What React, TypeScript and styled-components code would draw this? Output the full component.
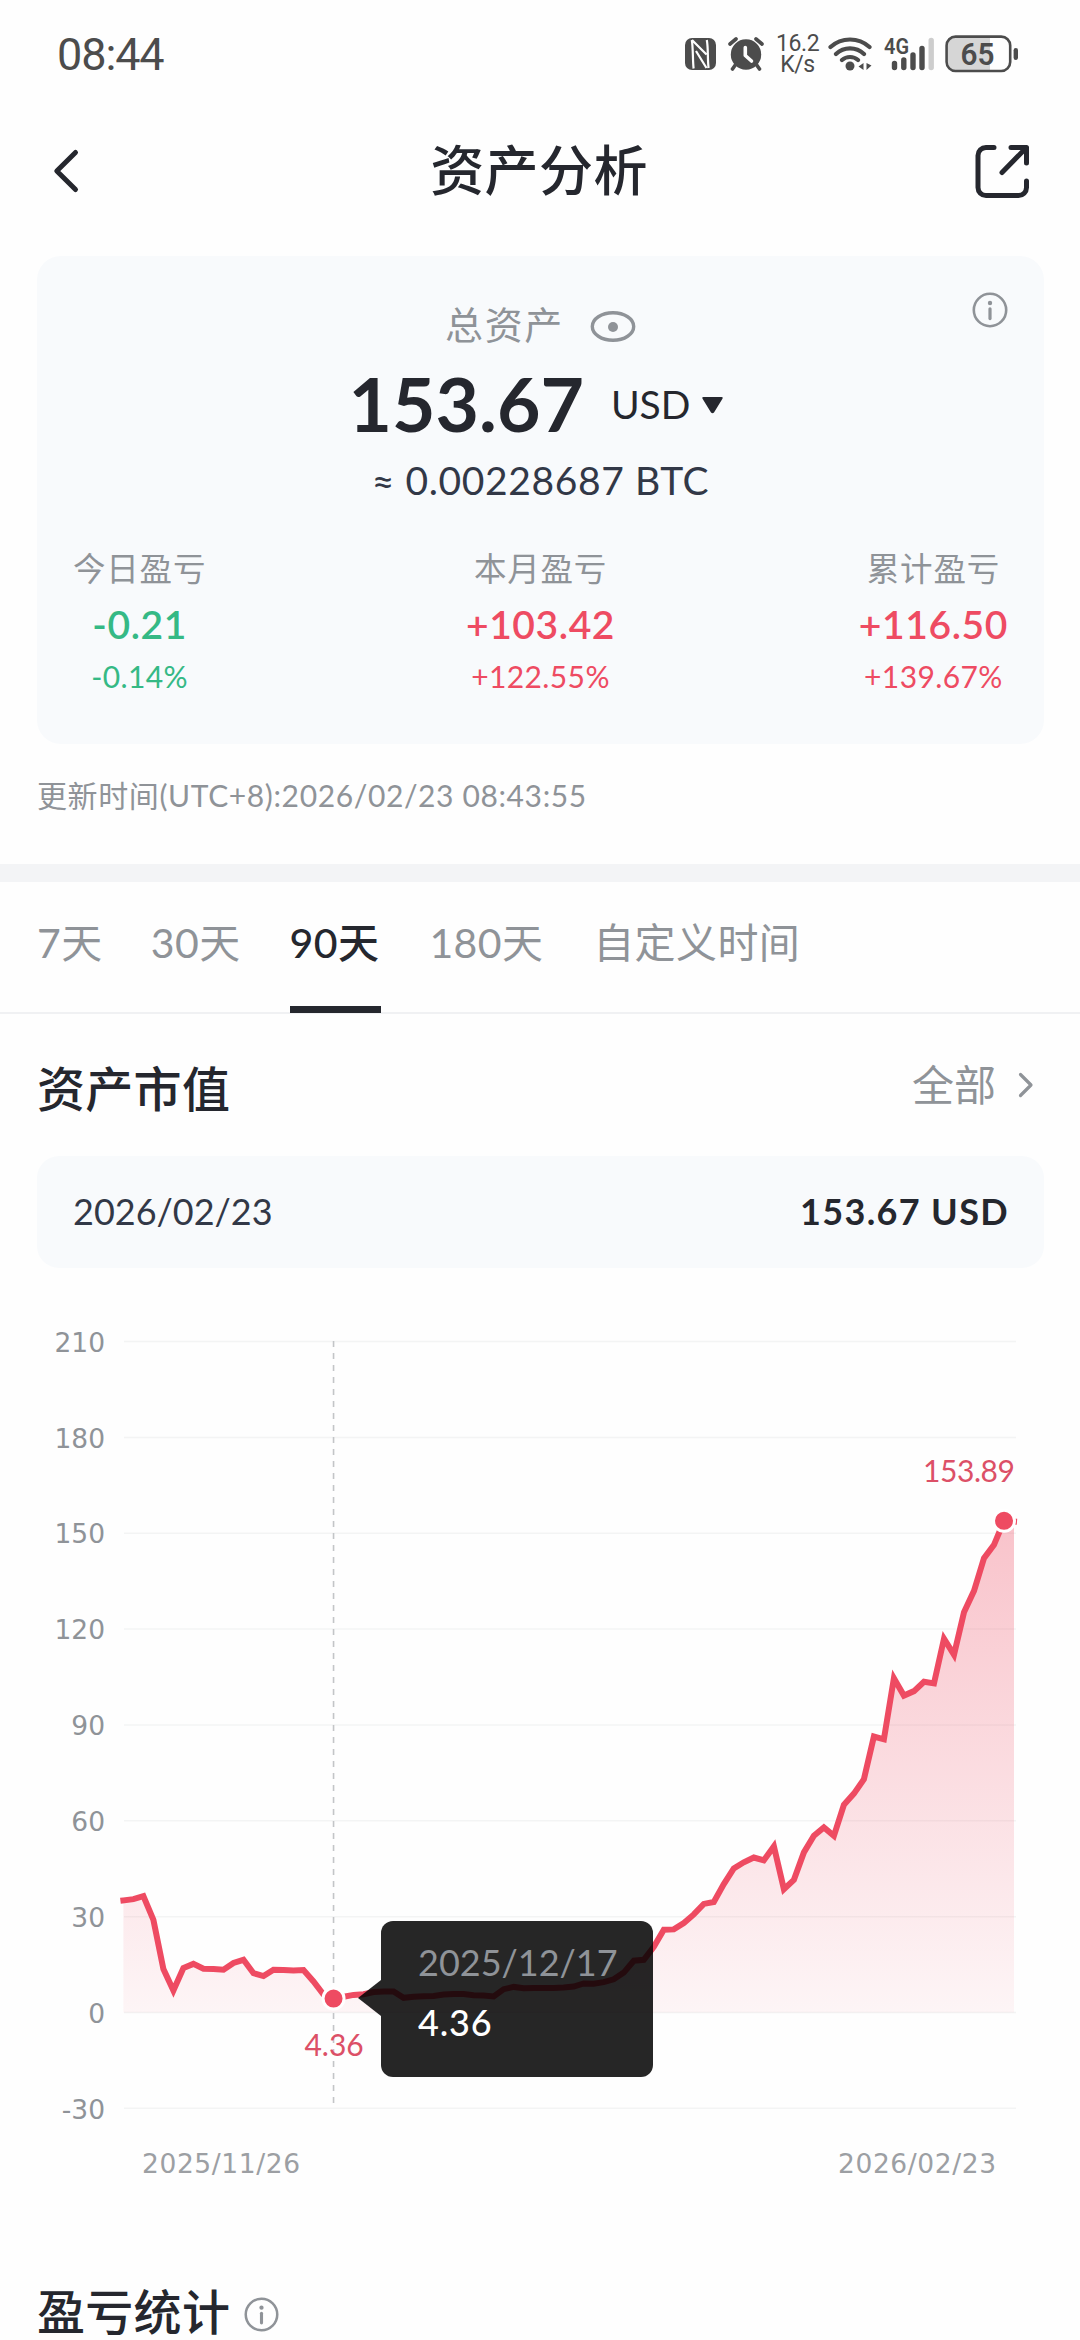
import React from "react";
import styled, { createGlobalStyle } from "styled-components";

const ink = "#25272e";
const muted = "#8f9398";
const red = "#ee4b62";
const green = "#35b985";
const panel = "#f8fafc";
const latin = `Lato, "Noto Sans CJK SC", sans-serif`;

const GlobalStyle = createGlobalStyle`
  html, body { margin: 0; padding: 0; background: #fefefe; }
  * { box-sizing: border-box; }
`;

const Screen = styled.main`
  width: 1080px;
  height: 2340px;
  overflow: hidden;
  display: flex;
  flex-direction: column;
  background: #fefefe;
  color: ${ink};
  font-family: ${latin};
  white-space: nowrap;
`;

const StatusBar = styled.div`
  height: 108px;
  flex: none;
  display: flex;
  align-items: center;
  justify-content: space-between;
  padding: 0 61px 0 57px;
  color: #4c4c4c;
  font-family: Roboto, sans-serif;
`;

const Clock = styled.span`
  padding-top: 2px;
  font-size: 45px;
  line-height: 54px;
  letter-spacing: -1.1px;
`;

const StatusIcons = styled.div`
  display: flex;
  align-items: center;
  height: 44px;
`;

const NetSpeed = styled.div`
  width: 43px;
  margin: 0 9px 0 12px;
  font-size: 23px;
  line-height: 21px;
  letter-spacing: -0.4px;
  text-align: center;
`;

const AlarmSvg = styled.svg`
  margin-left: 12px;
`;

const SignalSvg = styled.svg`
  margin-left: 12px;
`;

const BatterySvg = styled.svg`
  margin-left: 9px;
`;

const Header = styled.header`
  height: 125px;
  flex: none;
  display: flex;
  align-items: center;
  justify-content: space-between;
  padding: 0 48px;
`;

const PageTitle = styled.h1`
  margin: 0 0 0 2px;
  font-size: 54px;
  line-height: 64px;
  font-weight: 500;
  letter-spacing: 0.4px;
`;

const ShareSvg = styled.svg`
  margin-top: 3px;
`;

const Summary = styled.section`
  position: relative;
  flex: none;
  height: 488px;
  margin: 23px 36px 1px 37px;
  padding: 44px 36px 0;
  border-radius: 24px;
  background: ${panel};
  display: flex;
  flex-direction: column;
`;

const InfoCorner = styled.div`
  position: absolute;
  top: 36px;
  right: 36px;
  display: flex;
`;

const TotalLabel = styled.div`
  display: flex;
  align-items: center;
  justify-content: center;
  gap: 26px;
  height: 52px;
  font-size: 38px;
  line-height: 46px;
  letter-spacing: 1.6px;
  color: ${muted};
`;

const TotalText = styled.span`
  margin-bottom: 4px;
`;

const TotalRow = styled.div`
  display: flex;
  align-items: center;
  justify-content: center;
  height: 74px;
  margin-top: 14px;
  padding-right: 9px;

  svg {
    margin-top: 4px;
  }
`;

const TotalValue = styled.strong`
  font-size: 75px;
  line-height: 74px;
  font-weight: 700;
`;

const Currency = styled.span`
  font-size: 39px;
  line-height: 48px;
  margin: 2px 12px 0 27px;
`;

const Approx = styled.div`
  height: 50px;
  margin-top: 16px;
  font-size: 39px;
  line-height: 49px;
  letter-spacing: 0.6px;
  text-align: center;
  color: #323847;
`;

const Stats = styled.div`
  display: grid;
  grid-template-columns: 1fr auto 1fr;
  margin-top: 41px;

  > :first-child {
    justify-self: start;
  }

  > :last-child {
    justify-self: end;
  }
`;

const Stat = styled.div<{ $color: string }>`
  display: flex;
  flex-direction: column;
  align-items: center;
  min-width: 131px;
  color: ${(p) => p.$color};
`;

const StatLabel = styled.span`
  font-size: 32.5px;
  line-height: 44px;
  letter-spacing: 0.8px;
  color: ${muted};
`;

const StatValue = styled.span`
  margin-top: 11px;
  font-size: 39px;
  line-height: 44px;
  font-weight: 600;
  letter-spacing: 0.6px;
`;

const StatPercent = styled.span`
  margin-top: 10px;
  font-size: 30px;
  line-height: 40px;
  letter-spacing: 0.4px;
`;

const Updated = styled.p`
  flex: none;
  height: 119px;
  margin: 0;
  padding: 0 37px;
  font-size: 30px;
  line-height: 101px;
  letter-spacing: 0.62px;
  color: ${muted};
`;

const Divider = styled.div`
  flex: none;
  height: 18px;
  background: #f3f4f6;
`;

const Tabs = styled.nav`
  flex: none;
  display: flex;
  gap: 48.8px;
  height: 132px;
  padding: 0 37px;
  border-bottom: 2px solid #f0f1f3;
`;

const Tab = styled.button<{ $active?: boolean; $width: number }>`
  width: ${(p) => p.$width}px;
  height: 131px;
  padding: 0 0 3px;
  border: 0;
  border-bottom: 7px solid ${(p) => (p.$active ? ink : "transparent")};
  background: none;
  font: ${(p) => (p.$active ? 500 : 400)} 41px/117px ${latin};
  letter-spacing: 0.4px;
  text-align: left;
  white-space: nowrap;
  color: ${(p) => (p.$active ? ink : muted)};
`;

const SectionHead = styled.div`
  flex: none;
  display: flex;
  align-items: center;
  justify-content: space-between;
  height: 142px;
  padding: 8px 46px 0 37px;
`;

const SectionTitle = styled.h2`
  margin: 0;
  font-size: 48px;
  line-height: 56px;
  font-weight: 500;
  letter-spacing: 0.3px;
`;

const AllLink = styled.div`
  display: flex;
  align-items: center;
  gap: 22px;
  margin-bottom: 8px;
  font-size: 42px;
  line-height: 50px;
  color: ${muted};
`;

const Selected = styled.div`
  flex: none;
  display: flex;
  align-items: center;
  justify-content: space-between;
  height: 112px;
  margin: 0 36px 0 37px;
  padding: 0 36px 3px;
  border-radius: 22px;
  background: ${panel};
  font-size: 36px;
  color: #323847;
`;

const SelectedValue = styled.strong`
  margin-right: -1px;
  font-weight: 700;
  letter-spacing: 1.35px;
  color: ${ink};
`;

const ChartArea = styled.div`
  position: relative;
  flex: none;
  height: 972px;
`;

const Tooltip = styled.div`
  position: absolute;
  left: 381px;
  top: 653px;
  width: 272px;
  height: 156px;
  padding: 17px 37px;
  border-radius: 12px;
  background: rgba(0, 0, 0, 0.85);
  display: flex;
  flex-direction: column;
  font-size: 36px;
  line-height: 48px;
  color: #fff;

  &::before {
    content: "";
    position: absolute;
    left: -23px;
    top: 59px;
    border: solid transparent;
    border-width: 18px 23px 18px 0;
    border-right-color: rgba(0, 0, 0, 0.85);
  }
`;

const TooltipDate = styled.span`
  color: #8f9398;
`;

const TooltipValue = styled.span`
  margin-top: 12px;
  font-weight: 500;
  letter-spacing: 0.8px;
`;

const NextSection = styled.div`
  flex: none;
  display: flex;
  align-items: center;
  gap: 14px;
  height: 144px;
  padding: 0 37px;

  svg {
    margin-top: 5px;
  }
`;

const InfoIcon = ({ size }: { size: number }) => (
  <svg width={size} height={size} viewBox="0 0 36 36" fill="none">
    <circle cx="18" cy="18" r="16.2" stroke={muted} strokeWidth="2.6" />
    <circle cx="18" cy="11" r="2.2" fill={muted} />
    <path d="M18 16.8V26.6" stroke={muted} strokeWidth="3.2" strokeLinecap="round" />
  </svg>
);

const StatusGlyphs = () => (
  <>
    <svg width="31" height="32" viewBox="0 0 31 32">
      <rect width="31" height="32" rx="7" fill="#4c4c4c" />
      <path
        d="M6.8 2C8.2 10 7.6 22 8.6 30.5M7 2L21.5 16.5M11 13L21.5 30M21.8 2C23.4 10 22.4 22 23.6 30"
        stroke="#fefefe"
        strokeWidth="2.2"
        fill="none"
      />
    </svg>
    <AlarmSvg width="36" height="34" viewBox="0 0 36 34">
      <circle cx="18" cy="17.5" r="15.2" fill="#4c4c4c" />
      <path d="M2 7L8 2M34 7L28 2M8 27L4.5 32M28 27L31.5 32" stroke="#4c4c4c" strokeWidth="3.6" strokeLinecap="round" />
      <path d="M17.3 10.5V18.5L23.5 24" stroke="#fefefe" strokeWidth="3.6" strokeLinecap="round" strokeLinejoin="round" fill="none" />
    </AlarmSvg>
    <NetSpeed>
      16.2
      <br />
      K/s
    </NetSpeed>
    <svg width="44" height="36" viewBox="0 0 44 36" fill="none" stroke="#4c4c4c" strokeWidth="4.2" strokeLinecap="round">
      <path d="M2.5 11C13.5 1 30.5 1 41.5 11M8 18C16 10.5 28 10.5 36 18M14 24C18.5 20 25.5 20 30 24" />
      <circle cx="22" cy="30" r="4.5" fill="#4c4c4c" stroke="none" />
      <path d="M35.5 27V34L30.5 30.5ZM38.5 27V34L43.5 29.5Z" fill="#4c4c4c" stroke="none" />
    </svg>
    <SignalSvg width="52" height="48" viewBox="0 -6 52 48">
      <text x="0" y="17.5" fontFamily="Roboto" fontWeight="600" fontSize="22" textLength="25" lengthAdjust="spacingAndGlyphs" fill="#4c4c4c">
        4G
      </text>
      <g stroke="#4c4c4c" strokeWidth="5.4" strokeLinecap="round">
        <path d="M10.5 27.5V31.5M19.8 24V31.5M29 19V31.5M38 12.5V31.5" />
        <path d="M47.2 4.5V31.5" stroke="#cdcdcd" />
      </g>
    </SignalSvg>
    <BatterySvg width="74" height="38" viewBox="0 0 74 38">
      <path d="M11 3H45V35H11Q3 34 3 27V11Q3 3 11 3Z" fill="#d6d6d6" />
      <rect x="1.6" y="1.6" width="63.6" height="34.4" rx="9" fill="none" stroke="#4c4c4c" strokeWidth="2.6" />
      <rect x="68.6" y="13" width="4.4" height="12" rx="2.2" fill="#4c4c4c" />
      <text x="15.5" y="29.8" fontFamily="Roboto" fontWeight="600" fontSize="31" textLength="34" lengthAdjust="spacingAndGlyphs" fill="#4c4c4c">
        65
      </text>
    </BatterySvg>
  </>
);

const BackIcon = () => (
  <svg width="54" height="54" viewBox="0 0 54 54" fill="none">
    <path d="M27.5 8.5L8.8 27L27.5 45.5" stroke={ink} strokeWidth="5" strokeLinecap="round" strokeLinejoin="round" />
  </svg>
);

const ShareIcon = () => (
  <ShareSvg width="58" height="58" viewBox="0 0 58 58" fill="none" stroke={ink} strokeWidth="5" strokeLinecap="round" strokeLinejoin="round">
    <path d="M20 4.5H12A8 8 0 0 0 4 12.5V44.5A8 8 0 0 0 12 52.5H44.5A8 8 0 0 0 52.5 44.5V38" />
    <path d="M37 4.5H52.5V20M52 5L28 29.5" />
  </ShareSvg>
);

const EyeIcon = () => (
  <svg width="46" height="34" viewBox="0 0 46 34">
    <ellipse cx="23" cy="17.5" rx="20.7" ry="13.8" fill="none" stroke={muted} strokeWidth="3.4" />
    <circle cx="23" cy="18" r="5" fill={muted} />
  </svg>
);

const ARROW_DOWN = "M1.5 0H19.5Q21.5 0 20.3 1.9L12 15.5Q10.5 17 9 15.5L.7 1.9Q-.5 0 1.5 0Z";

const CHART_TOP = 1268;
const X0 = 123.4;
const STEP = 10.007;
const ZERO_Y = 2012.5;
const UNIT = 95.85 / 30;

const values = [
  35.1, 35.5, 36.4, 29.0, 13.6, 6.9, 13.9, 15.2, 13.7, 13.6, 13.4, 15.5, 16.5, 12.3, 11.4, 13.4, 13.3, 13.1, 13.3,
  9.7, 5.6, 4.36, 4.9, 5.5, 5.7, 6.4, 6.6, 6.6, 4.6, 4.9, 5.1, 5.2, 5.6, 5.8, 5.8, 5.4, 5.3, 5.0, 7.3, 8.0, 7.6, 7.7,
  7.7, 7.7, 7.8, 8.1, 9.1, 9.0, 9.5, 10.4, 12.5, 16.2, 16.5, 20.6, 25.9, 26.0, 28.0, 30.7, 34.0, 34.6, 40.2, 45.1,
  47.0, 48.5, 47.6, 52.0, 38.6, 41.5, 50.1, 55.3, 57.9, 55.3, 65.0, 68.5, 73.0, 86.4, 85.5, 104.6, 99.2, 100.6,
  103.5, 103.0, 117.0, 112.0, 125.3, 132.0, 142.2, 146.4, 153.89, 153.67,
];

const toX = (i: number) => X0 + i * STEP;
const toY = (v: number) => ZERO_Y - CHART_TOP - v * UNIT;

const ticks = [210, 180, 150, 120, 90, 60, 30, 0, -30];

const Chart = () => {
  const line = values.map((v, i) => `${i ? "L" : "M"}${toX(i).toFixed(1)} ${toY(v).toFixed(1)}`).join("");
  const area = `${line}V${toY(0)}H${X0}Z`;
  const low = { x: toX(21), y: toY(4.36) };
  const high = { x: toX(88), y: toY(153.89) };
  return (
    <svg width="1080" height="972" viewBox="0 0 1080 972">
      <defs>
        <linearGradient id="fade" x1="0" y1="0" x2="0" y2="1">
          <stop offset="0" stopColor={red} stopOpacity="0.33" />
          <stop offset="1" stopColor={red} stopOpacity="0.05" />
        </linearGradient>
      </defs>
      {ticks.map((t) => (
        <g key={t}>
          <path d={`M124 ${toY(t)}H1016`} stroke="#f3f4f4" strokeWidth="1.5" />
          <text x="105" y={toY(t) + 10.2} textAnchor="end" fontFamily="DejaVu Sans" fontSize="26.5" fill={muted}>
            {t}
          </text>
        </g>
      ))}
      <path d={`M${low.x} 73V836`} stroke="#c3c5c7" strokeWidth="1.6" strokeDasharray="6 6" />
      <path d={area} fill="url(#fade)" />
      <path d={line} fill="none" stroke={red} strokeWidth="6" strokeLinecap="square" strokeMiterlimit="10" />
      {[low, high].map((p) => (
        <circle key={p.x} cx={p.x} cy={p.y} r="10.5" fill={red} stroke="#fff" strokeWidth="3" />
      ))}
      <g fontFamily="Lato" fontSize="30" fill="#dc5067">
        <text x={low.x + 0.5} y="788" textAnchor="middle">4.36</text>
        <text x="923" y="214" textLength="92">153.89</text>
      </g>
      <g fontFamily="DejaVu Sans" fontSize="26.5" fill="#9c9fa3">
        <text x="142" y="905" textLength="158">2025/11/26</text>
        <text x="838" y="905" textLength="158">2026/02/23</text>
      </g>
    </svg>
  );
};

const stats = [
  { label: "今日盈亏", value: "-0.21", percent: "-0.14%", color: green },
  { label: "本月盈亏", value: "+103.42", percent: "+122.55%", color: red },
  { label: "累计盈亏", value: "+116.50", percent: "+139.67%", color: red },
];

const tabs = [
  { label: "7天", width: 65 },
  { label: "30天", width: 90 },
  { label: "90天", width: 91, active: true },
  { label: "180天", width: 115 },
  { label: "自定义时间", width: 208 },
];

export default function App() {
  return (
    <Screen>
      <GlobalStyle />
      <StatusBar>
        <Clock>08:44</Clock>
        <StatusIcons>
          <StatusGlyphs />
        </StatusIcons>
      </StatusBar>
      <Header>
        <BackIcon />
        <PageTitle>资产分析</PageTitle>
        <ShareIcon />
      </Header>
      <Summary>
        <InfoCorner>
          <InfoIcon size={36} />
        </InfoCorner>
        <TotalLabel>
          <TotalText>总资产</TotalText>
          <EyeIcon />
        </TotalLabel>
        <TotalRow>
          <TotalValue>153.67</TotalValue>
          <Currency>USD</Currency>
          <svg width="21" height="17" viewBox="0 0 21 17">
            <path d={ARROW_DOWN} fill={ink} />
          </svg>
        </TotalRow>
        <Approx>≈ 0.00228687 BTC</Approx>
        <Stats>
          {stats.map((s) => (
            <Stat key={s.label} $color={s.color}>
              <StatLabel>{s.label}</StatLabel>
              <StatValue>{s.value}</StatValue>
              <StatPercent>{s.percent}</StatPercent>
            </Stat>
          ))}
        </Stats>
      </Summary>
      <Updated>更新时间(UTC+8):2026/02/23 08:43:55</Updated>
      <Divider />
      <Tabs>
        {tabs.map((t) => (
          <Tab key={t.label} $active={t.active} $width={t.width}>
            {t.label}
          </Tab>
        ))}
      </Tabs>
      <SectionHead>
        <SectionTitle>资产市值</SectionTitle>
        <AllLink>
          全部
          <svg width="16" height="26" viewBox="0 0 16 26" fill="none">
            <path d="M2.5 2.5L13 13L2.5 23.5" stroke={muted} strokeWidth="3.2" strokeLinecap="round" strokeLinejoin="round" />
          </svg>
        </AllLink>
      </SectionHead>
      <Selected>
        <span>2026/02/23</span>
        <SelectedValue>153.67 USD</SelectedValue>
      </Selected>
      <ChartArea>
        <Chart />
        <Tooltip>
          <TooltipDate>2025/12/17</TooltipDate>
          <TooltipValue>4.36</TooltipValue>
        </Tooltip>
      </ChartArea>
      <NextSection>
        <SectionTitle>盈亏统计</SectionTitle>
        <InfoIcon size={35} />
      </NextSection>
    </Screen>
  );
}
